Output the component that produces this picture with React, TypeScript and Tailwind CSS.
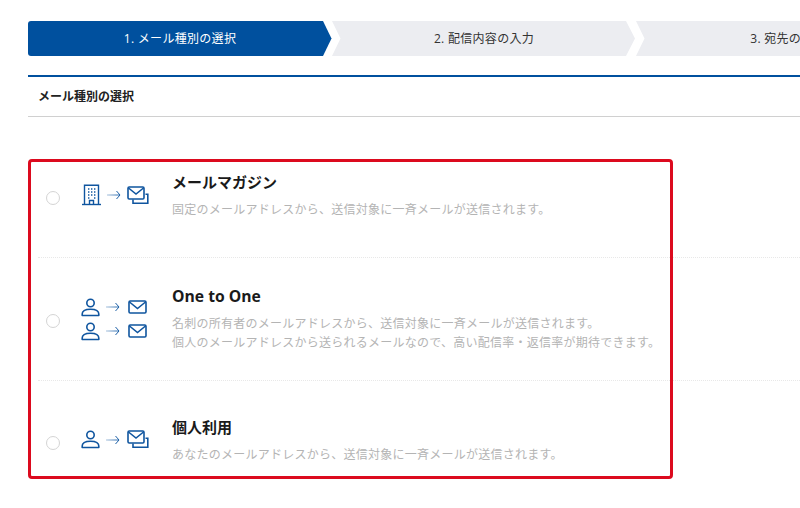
const font = "[font-family:'Open_Sans','Noto_Sans_CJK_JP',sans-serif]";

function Building() {
  return (
    <svg width="21" height="22" viewBox="0 0 21 22" fill="none" stroke="#0f559f" strokeWidth="1.4">
      <path d="M3.5 20.5V1.2H17.5V20.5" />
      <path d="M1 20.5H20" />
      <path d="M8.5 20.5V16.5H12.5V20.5" />
      <path
        d="M7 5h1.4M10 5h1.4M13 5h1.4M7 8h1.4M10 8h1.4M13 8h1.4M7 11h1.4M10 11h1.4M13 11h1.4M7 14h1.4M13 14h1.4"
        strokeWidth="1.3"
      />
    </svg>
  );
}

function Person() {
  return (
    <svg width="19" height="19" viewBox="0 0 19 19" fill="none" stroke="#0f559f" strokeWidth="1.6">
      <circle cx="9.5" cy="5" r="3.7" />
      <path d="M1.2 17.5V16C1.2 13 4 11.2 9.5 11.2S17.8 13 17.8 16V17.5Z" strokeLinejoin="round" />
    </svg>
  );
}

function Arrow() {
  return (
    <svg width="14" height="10" viewBox="0 0 14 10" fill="none" strokeWidth="1" className="block">
      <defs>
        <linearGradient id="arrowFade" gradientUnits="userSpaceOnUse" x1="0" x2="13" y1="5" y2="5">
          <stop offset="0" stopColor="#a9c3de" />
          <stop offset="1" stopColor="#1f62a8" />
        </linearGradient>
      </defs>
      <path d="M0 5H13" stroke="url(#arrowFade)" />
      <path d="M9.5 1L13 5L9.5 9" stroke="#1f62a8" />
    </svg>
  );
}

function Mail() {
  return (
    <svg width="19" height="14" viewBox="0 0 19 14" fill="none" stroke="#0f559f" strokeWidth="1.6">
      <rect x="1" y="1" width="17" height="12" rx="1.2" />
      <path d="M1.5 2L9.5 8.5L17.5 2" />
    </svg>
  );
}

function MailStack() {
  return (
    <svg width="22" height="19" viewBox="0 0 22 19" fill="none" stroke="#0f559f" strokeWidth="1.6">
      <rect x="1" y="1" width="16" height="12" rx="1.2" />
      <path d="M1.5 2L9 8L16.5 2" />
      <path d="M6 13.5V17.2H20.8V8.2H18.5" />
    </svg>
  );
}

function Radio() {
  return <span className="mt-1 h-[14px] w-[14px] shrink-0 rounded-full border border-[#d4d4d4] bg-white" />;
}

function Step({ label, active }: { label: string; active?: boolean }) {
  return (
    <div
      className={
        active
          ? "flex h-[35px] w-[304px] shrink-0 items-center justify-center rounded-l-[3px] bg-[#00509e] text-[12px] tracking-[0.3px] text-white [clip-path:polygon(0_0,295px_0,303.5px_50%,295px_100%,0_100%)]"
          : "flex h-[35px] w-[304px] shrink-0 items-center justify-center bg-[#ecedf1] text-[12px] tracking-[0.3px] text-[#333] [clip-path:polygon(0_0,294px_0,303px_50%,294px_100%,0_100%,8.5px_50%)]"
      }
    >
      {label}
    </div>
  );
}

function Row({
  icons,
  title,
  titleSize,
  lines,
  last,
}: {
  icons: React.ReactNode;
  title: string;
  titleSize?: string;
  lines: string[];
  last?: boolean;
}) {
  return (
    <div
      className={
        last
          ? "flex h-[119px] items-center pl-2"
          : "flex h-[123px] items-center border-b border-dotted border-[#e8e8e8] pl-2"
      }
    >
      <Radio />
      <div className="ml-[21px] w-[91px] shrink-0">{icons}</div>
      <div className="pb-[2px]">
        <div className={`${titleSize ?? "text-[15px]"} leading-[22px] font-bold text-[#1a1a1a]`}>{title}</div>
        <div className="mt-[7px] text-[12px] leading-[19px] tracking-[0.25px] text-[#b4b4b4]">
          {lines.map((line) => (
            <div key={line}>{line}</div>
          ))}
        </div>
      </div>
    </div>
  );
}

export default function App() {
  return (
    <div className={`relative h-[508px] w-[800px] overflow-hidden bg-white ${font}`}>
      <div className="pt-[21px] pl-7">
        <div className="flex w-[1000px]">
          <Step label="1. メール種別の選択" active />
          <Step label="2. 配信内容の入力" />
          <Step label="3. 宛先の選択" />
        </div>
        <div className="mt-[19px] flex h-[42px] items-center border-t-2 border-b border-t-[#00509e] border-b-[#d0d0d0] pl-[10px] text-[12px] font-bold text-[#222]">
          メール種別の選択
        </div>
        <div className="mt-[18px] pl-[10px]">
          <Row
            icons={
              <div className="mb-[2px] flex items-center">
                <Building />
                <span className="ml-[5px]"><Arrow /></span>
                <span className="ml-[6px]"><MailStack /></span>
              </div>
            }
            title="メールマガジン"
            lines={["固定のメールアドレスから、送信対象に一斉メールが送信されます。"]}
          />
          <Row
            icons={
              <div className="flex flex-col gap-[5px]">
                {[0, 1].map((i) => (
                  <div key={i} className="flex items-center">
                    <Person />
                    <span className="ml-[6px]"><Arrow /></span>
                    <span className="ml-[8px]"><Mail /></span>
                  </div>
                ))}
              </div>
            }
            title="One to One"
            titleSize="text-[15.7px]"
            lines={[
              "名刺の所有者のメールアドレスから、送信対象に一斉メールが送信されます。",
              "個人のメールアドレスから送られるメールなので、高い配信率・返信率が期待できます。",
            ]}
          />
          <Row
            icons={
              <div className="mb-[2px] flex items-center">
                <Person />
                <span className="ml-[6px]"><Arrow /></span>
                <span className="ml-[7px]"><MailStack /></span>
              </div>
            }
            title="個人利用"
            lines={["あなたのメールアドレスから、送信対象に一斉メールが送信されます。"]}
            last
          />
        </div>
      </div>
      {/* highlight frame drawn over the list */}
      <div className="pointer-events-none absolute top-[159px] left-7 h-[320px] w-[645px] rounded-[4px] border-[3px] border-[#dc0a1e]" />
    </div>
  );
}
